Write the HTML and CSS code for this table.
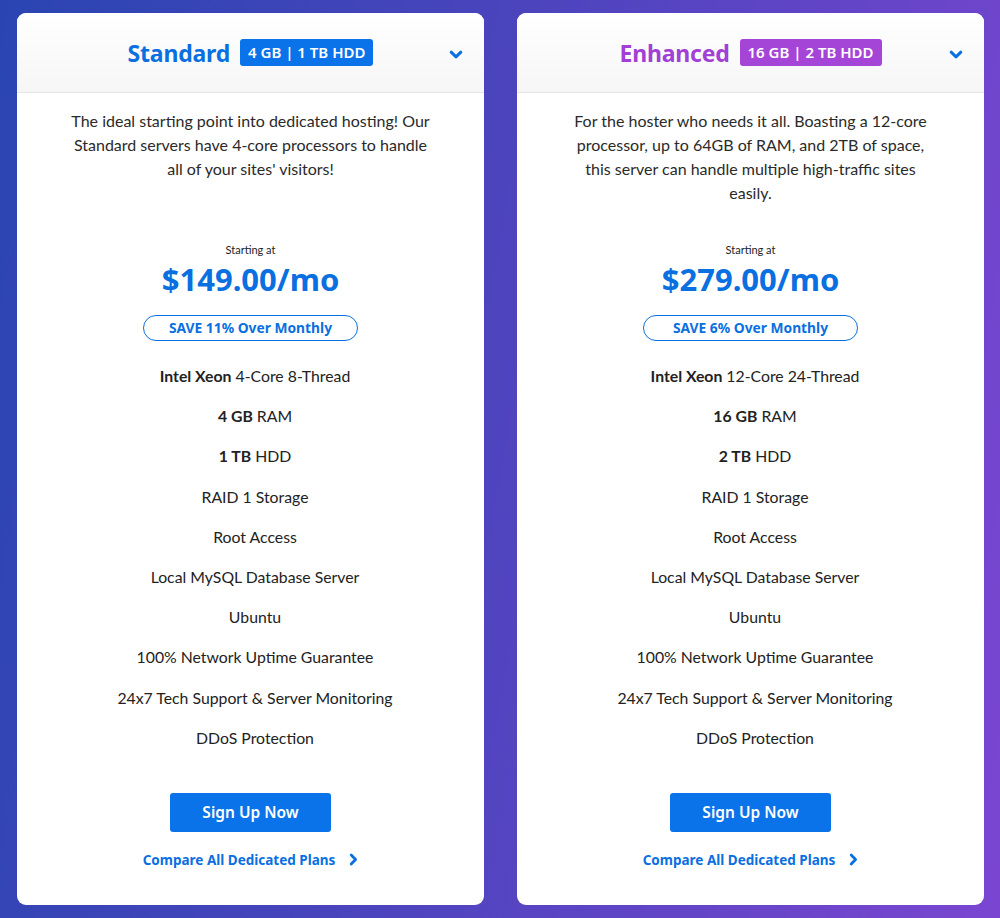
FILE: index.html
```html
<!DOCTYPE html>
<html>
<head>
<meta charset="utf-8">
<link rel="stylesheet" href="styles.css">
</head>
<body>
<div class="plans">
  <div class="card">
    <div class="card-head">
      <h2 class="title blue">Standard</h2>
      <span class="badge bg-blue">4 GB | 1 TB HDD</span>
      <svg class="toggle" width="14" height="10" viewBox="0 0 14 10"><path d="M2.2 2.2 L7 6.8 L11.8 2.2" fill="none" stroke="#0a6fe0" stroke-width="3" stroke-linecap="round" stroke-linejoin="round"/></svg>
    </div>
    <div class="card-body">
      <p class="desc">The ideal starting point into dedicated hosting! Our Standard servers have 4-core processors to handle all of your sites' visitors!</p>
      <div class="starting">Starting at</div>
      <div class="price">$149.00/mo</div>
      <div class="save">SAVE 11% Over Monthly</div>
      <ul class="features">
        <li><b>Intel Xeon</b> 4-Core 8-Thread</li>
        <li><b>4 GB</b> RAM</li>
        <li><b>1 TB</b> HDD</li>
        <li>RAID 1 Storage</li>
        <li>Root Access</li>
        <li>Local MySQL Database Server</li>
        <li>Ubuntu</li>
        <li>100% Network Uptime Guarantee</li>
        <li>24x7 Tech Support &amp; Server Monitoring</li>
        <li>DDoS Protection</li>
      </ul>
      <a class="signup">Sign Up Now</a>
      <a class="compare">Compare All Dedicated Plans <svg width="9" height="13" viewBox="0 0 9 13"><path d="M2.2 2 L6.6 6.5 L2.2 11" fill="none" stroke="#0a6fe0" stroke-width="2.8" stroke-linecap="round" stroke-linejoin="round"/></svg></a>
    </div>
  </div>
  <div class="card">
    <div class="card-head">
      <h2 class="title purple">Enhanced</h2>
      <span class="badge bg-purple">16 GB | 2 TB HDD</span>
      <svg class="toggle" width="14" height="10" viewBox="0 0 14 10"><path d="M2.2 2.2 L7 6.8 L11.8 2.2" fill="none" stroke="#0a6fe0" stroke-width="3" stroke-linecap="round" stroke-linejoin="round"/></svg>
    </div>
    <div class="card-body">
      <p class="desc">For the hoster who needs it all. Boasting a 12-core processor, up to 64GB of RAM, and 2TB of space, this server can handle multiple high-traffic sites easily.</p>
      <div class="starting">Starting at</div>
      <div class="price">$279.00/mo</div>
      <div class="save">SAVE 6% Over Monthly</div>
      <ul class="features">
        <li><b>Intel Xeon</b> 12-Core 24-Thread</li>
        <li><b>16 GB</b> RAM</li>
        <li><b>2 TB</b> HDD</li>
        <li>RAID 1 Storage</li>
        <li>Root Access</li>
        <li>Local MySQL Database Server</li>
        <li>Ubuntu</li>
        <li>100% Network Uptime Guarantee</li>
        <li>24x7 Tech Support &amp; Server Monitoring</li>
        <li>DDoS Protection</li>
      </ul>
      <a class="signup">Sign Up Now</a>
      <a class="compare">Compare All Dedicated Plans <svg width="9" height="13" viewBox="0 0 9 13"><path d="M2.2 2 L6.6 6.5 L2.2 11" fill="none" stroke="#0a6fe0" stroke-width="2.8" stroke-linecap="round" stroke-linejoin="round"/></svg></a>
    </div>
  </div>
</div>
</body>
</html>
```

FILE: styles.css
```css
html, body {
  margin: 0;
  height: 100%;
}
body {
  background: linear-gradient(100deg, #2a45b2 0%, #4b44bd 45%, #7a46d1 100%);
  font-family: "Lato", "Open Sans", sans-serif;
  color: #222;
}
.plans {
  display: flex;
  gap: 33px;
  padding: 13px 16px 0 17px;
}
.card {
  width: 467px;
  height: 892px;
  background: #fff;
  border-radius: 9px;
  display: flex;
  flex-direction: column;
  overflow: hidden;
}
.card-head {
  position: relative;
  height: 79px;
  border-bottom: 1px solid #e6e6e6;
  background: linear-gradient(#ffffff, #f6f6f7);
  display: flex;
  align-items: center;
  justify-content: center;
  gap: 10px;
}
.title {
  margin: 0;
  font-family: "Noto Sans", sans-serif;
  font-weight: 700;
  font-size: 23px;
  letter-spacing: -0.2px;
}
.blue { color: #0a6fe0; }
.purple { color: #a13fd6; }
.badge {
  color: #fff;
  font-family: "Noto Sans", sans-serif;
  font-weight: 600;
  font-size: 15px;
  padding: 2px 8px;
  border-radius: 3px;
  line-height: 23px;
}
.bg-blue { background: #0a73ea; }
.bg-purple { background: #a545d8; }
.toggle {
  position: absolute;
  right: 21px;
  top: 37px;
}
.card-body {
  display: flex;
  flex-direction: column;
  align-items: center;
}
.desc {
  margin: 16px 0 0;
  max-width: 370px;
  text-align: center;
  font-size: 16px;
  line-height: 24px;
  color: #2a2a2a;
  height: 96px;
}
.starting {
  margin-top: 38px;
  font-size: 11px;
  color: #222;
}
.price {
  margin-top: 4px;
  font-family: "Noto Sans", sans-serif;
  font-weight: 700;
  font-size: 31px;
  color: #0a6fe0;
  line-height: 38px;
}
.save {
  margin-top: 17px;
  width: 215px;
  box-sizing: border-box;
  height: 26px;
  border: 1.5px solid #0a6fe0;
  border-radius: 14px;
  text-align: center;
  line-height: 23px;
  font-family: "Noto Sans", sans-serif;
  font-weight: 700;
  font-size: 13.8px;
  color: #0a6fe0;
}
.features {
  list-style: none;
  margin: 15px 0 0;
  padding: 0 0 0 9px;
  text-align: center;
  font-size: 15.8px;
}
.features li {
  height: 40.2px;
  line-height: 40.2px;
}
.features b { font-weight: 700; }
.signup {
  margin-top: 35px;
  width: 161px;
  height: 39px;
  background: #0a73ea;
  color: #fff;
  border-radius: 3px;
  text-align: center;
  line-height: 39px;
  font-family: "Noto Sans", sans-serif;
  font-weight: 600;
  font-size: 15.5px;
}
.compare {
  margin-top: 19px;
  display: flex;
  align-items: center;
  gap: 14px;
  font-family: "Noto Sans", sans-serif;
  font-weight: 700;
  font-size: 13.5px;
  color: #0a6fe0;
}
```
